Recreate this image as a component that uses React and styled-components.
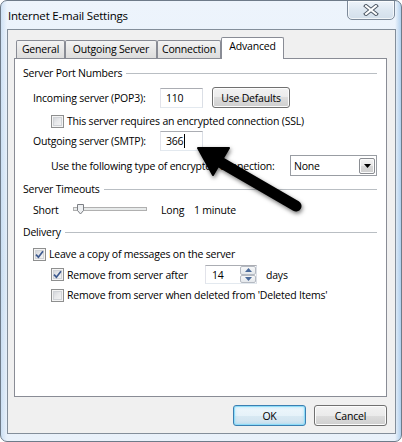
/* eslint-disable */
import React from 'react'
import styled, {createGlobalStyle} from 'styled-components'

const GlobalStyle = createGlobalStyle`
  html, body {
    margin: 0;
    padding: 0;
    background: #ffffff;
  }
  body {
    font-family: 'Segoe UI', 'Open Sans', 'Noto Sans', sans-serif;
    font-size: 10.5px;
    letter-spacing: -0.2px;
    color: #000;
  }
`

const Window = styled.div`
  position: relative;
  box-sizing: border-box;
  width: 402px;
  height: 442px;
  padding: 0 5px 7px 6px;
  border: 1px solid #6e7b89;
  border-radius: 7px;
  display: flex;
  flex-direction: column;
  overflow: hidden;
  background:
    linear-gradient(90deg, rgba(150, 190, 230, 0.35) 0, rgba(255, 255, 255, 0) 6px,
      rgba(255, 255, 255, 0) 394px, rgba(140, 185, 228, 0.6) 100%),
    linear-gradient(180deg, #edf4fc 0%, #e2edf8 60%, #e9f1fa 100%);
`

const TitleBar = styled.div`
  height: 28px;
  flex: none;
  display: flex;
  justify-content: space-between;
  align-items: flex-start;
`

const Title = styled.div`
  padding: 7px 0 0 1px;
  font-size: 11.5px;
  line-height: 16px;
`

const CloseButton = styled.div`
  box-sizing: border-box;
  width: 48px;
  height: 20px;
  margin: -1px 1px 0 0;
  border: 1px solid #7d8a9a;
  border-radius: 0 0 5px 5px;
  background: linear-gradient(180deg, #eef4fa 0%, #dde7f1 50%, #d3dfeb 100%);
  box-shadow: inset 0 0 0 1px rgba(255, 255, 255, 0.7);
  display: flex;
  align-items: center;
  justify-content: center;
`

const Client = styled.div`
  box-sizing: border-box;
  width: 389px;
  height: 405px;
  border: 1px solid #838e9a;
  background: #f0f0f0;
  padding: 7px 8px 0 6px;
  display: flex;
  flex-direction: column;
`

const TabStrip = styled.div`
  position: relative;
  z-index: 1;
  height: 21px;
  flex: none;
  display: flex;
  align-items: flex-end;
  padding-left: 2px;
`

const Tab = styled.div`
  box-sizing: border-box;
  width: ${p => p.$w}px;
  height: ${p => (p.$active ? 22 : 18)}px;
  margin-bottom: ${p => (p.$active ? -1 : 0)}px;
  border: 1px solid #898c95;
  border-bottom: none;
  border-radius: 2px 2px 0 0;
  background: ${p => (p.$active ? '#ffffff' : 'linear-gradient(180deg, #f3f3f3 0%, #e6e6e6 55%, #dddddd 100%)')};
  padding-top: 1px;
  text-align: center;
  line-height: 15px;
  white-space: nowrap;
`

const Panel = styled.div`
  box-sizing: border-box;
  width: 373px;
  height: 339px;
  flex: none;
  border: 1px solid #898c95;
  background: #ffffff;
  padding: 0 9px 0 8px;
  display: flex;
  flex-direction: column;
`

const GroupHeader = styled.div`
  display: flex;
  align-items: center;
  height: 14px;
  margin-top: ${p => p.$mt}px;
  white-space: nowrap;

  &::after {
    content: '';
    flex: 1;
    height: 1px;
    margin-left: 4px;
    background: #b9bec3;
  }
`

const Row = styled.div`
  display: flex;
  align-items: center;
  height: ${p => p.$h}px;
  margin-top: ${p => p.$mt}px;
  padding-left: ${p => p.$indent}px;
  white-space: nowrap;
`

const Label = styled.span`
  flex: none;
  width: ${p => (p.$w ? `${p.$w}px` : 'auto')};
  margin-left: ${p => p.$ml || 0}px;
`

const TextBox = styled.div`
  box-sizing: border-box;
  width: ${p => p.$w}px;
  height: ${p => p.$h}px;
  flex: none;
  border: 1px solid;
  border-color: #abadb3 #dbdfe6 #e3e9ef #e2e3ea;
  background: #ffffff;
  padding-left: 5px;
  display: flex;
  align-items: center;
`

const Caret = styled.span`
  width: 1px;
  height: 14px;
  margin-left: 1px;
  background: #000;
`

const Button = styled.div`
  box-sizing: border-box;
  width: ${p => p.$w}px;
  height: 21px;
  flex: none;
  margin-left: ${p => p.$ml || 0}px;
  border: 1px solid ${p => (p.$primary ? '#3c7fb1' : '#707070')};
  border-radius: 3px;
  background: ${p =>
    p.$primary
      ? 'linear-gradient(180deg, #eef7fc 0%, #e6f2f9 50%, #d8e9f3 50%, #cfe2ee 100%)'
      : 'linear-gradient(180deg, #f2f2f2 0%, #ebebeb 50%, #dddddd 50%, #cfcfcf 100%)'};
  box-shadow: ${p =>
    p.$primary
      ? 'inset 0 0 0 1px #8fdcf8, inset 0 0 3px 1px rgba(72, 200, 245, 0.35)'
      : 'inset 0 0 0 1px #fcfcfc'};
  display: flex;
  align-items: center;
  justify-content: center;
`

const CheckBox = styled.span`
  box-sizing: border-box;
  width: 13px;
  height: 13px;
  flex: none;
  border: 1px solid #8e8f8f;
  background: linear-gradient(135deg, #c9ccd1 0%, #e8e9eb 50%, #f7f7f7 100%);
  box-shadow: inset 0 0 0 1px #f4f4f4, inset 0 0 0 2px #d0d3d7;
  display: flex;
  align-items: center;
  justify-content: center;
`

const CheckLabel = styled.label`
  display: flex;
  align-items: center;
  gap: 3px;
  flex: none;
  width: ${p => (p.$w ? `${p.$w}px` : 'auto')};
`

const Combo = styled.div`
  box-sizing: border-box;
  width: 87px;
  height: 21px;
  flex: none;
  border: 1px solid #999da3;
  background: #ffffff;
  padding: 0 1px 0 3px;
  display: flex;
  align-items: center;
  justify-content: space-between;
`

const ComboButton = styled.div`
  box-sizing: border-box;
  width: 16px;
  height: 16px;
  border: 1px solid #8a8d92;
  border-radius: 2px;
  background: linear-gradient(180deg, #f4f4f4 0%, #e8e8e8 50%, #d8d8d8 50%, #cfcfcf 100%);
  box-shadow: inset 0 0 0 1px #fbfbfb;
  display: flex;
  align-items: center;
  justify-content: center;
`

const Spin = styled(TextBox)`
  padding: 0 0 0 6px;
  justify-content: space-between;
`

const SpinButtons = styled.div`
  width: 16px;
  height: 17px;
  display: flex;
  flex-direction: column;
`

const SpinButton = styled.div`
  box-sizing: border-box;
  flex: 1;
  border: 1px solid #b5bac2;
  border-radius: 2px;
  background: linear-gradient(180deg, #f6f7f8 0%, #e4e8ec 100%);
  display: flex;
  align-items: center;
  justify-content: center;
`

const Footer = styled.div`
  display: flex;
  justify-content: flex-end;
  gap: 8px;
  margin-top: 8px;
`

const Overlay = styled.svg`
  position: absolute;
  left: -1px;
  top: -1px;
  pointer-events: none;
  filter: drop-shadow(1px 2px 2px rgba(0, 0, 0, 0.55));
`

const Check = ({checked}) => (
  <CheckBox>
    {checked && (
      <svg width="9" height="9" viewBox="0 0 9 9">
        <path d="M1 4.6 L3.4 7.2 L8 1.2" fill="none" stroke="#3d5a8f" strokeWidth="1.7" />
      </svg>
    )}
  </CheckBox>
)

const Tri = ({up, color = '#000'}) => (
  <svg width="7" height="4" viewBox="0 0 7 4">
    <path d={up ? 'M0 4 L3.5 0 L7 4 Z' : 'M0 0 L7 0 L3.5 4 Z'} fill={color} />
  </svg>
)

const Slider = () => (
  <svg width="88" height="16" viewBox="0 0 88 16" style={{flex: 'none'}}>
    <rect x="0.5" y="5.5" width="73" height="3" fill="#e7eaea" stroke="#b0b0b0" />
    <path d="M4.5 2.5 h6 v6 l-3 3.5 l-3 -3.5 z" fill="#eef0f2" stroke="#7c7f84" />
  </svg>
)

const Arrow = () => (
  <Overlay width="402" height="442" viewBox="0 0 402 442">
    <line x1="220" y1="162" x2="296" y2="206" stroke="#000" strokeWidth="11" strokeLinecap="round" />
    <path d="M198 148 L229 148 L213 175 Z" fill="#000" stroke="#000" strokeWidth="2" strokeLinejoin="round" />
  </Overlay>
)

const App = () => (
  <>
    <GlobalStyle />
    <Window>
      <TitleBar>
        <Title>Internet E-mail Settings</Title>
        <CloseButton>
          <svg width="16" height="12" viewBox="0 0 16 12">
            <path d="M3 2 L13 10 M13 2 L3 10" stroke="#4e5966" strokeWidth="4" strokeLinecap="square" />
            <path d="M3 2 L13 10 M13 2 L3 10" stroke="#ffffff" strokeWidth="2" strokeLinecap="square" />
          </svg>
        </CloseButton>
      </TitleBar>
      <Client>
        <TabStrip>
          <Tab $w={49}>General</Tab>
          <Tab $w={92}>Outgoing Server</Tab>
          <Tab $w={64}>Connection</Tab>
          <Tab $w={63} $active>Advanced</Tab>
        </TabStrip>
        <Panel>
          <GroupHeader $mt={7}>Server Port Numbers</GroupHeader>
          <Row $h={21} $mt={7} $indent={10}>
            <Label $w={127}>Incoming server (POP3):</Label>
            <TextBox $w={43} $h={20}>110</TextBox>
            <Button $w={78} $ml={9}>Use Defaults</Button>
          </Row>
          <Row $h={16} $mt={5} $indent={28}>
            <CheckLabel>
              <Check />
              This server requires an encrypted connection (SSL)
            </CheckLabel>
          </Row>
          <Row $h={20} $mt={2} $indent={10}>
            <Label $w={127}>Outgoing server (SMTP):</Label>
            <TextBox $w={43} $h={20}>
              366
              <Caret />
            </TextBox>
          </Row>
          <Row $h={21} $mt={4} $indent={28}>
            <Label $w={239}>Use the following type of encrypted connection:</Label>
            <Combo>
              None
              <ComboButton>
                <Tri />
              </ComboButton>
            </Combo>
          </Row>

          <GroupHeader $mt={6}>Server Timeouts</GroupHeader>
          <Row $h={16} $mt={6} $indent={10}>
            <Label $w={40}>Short</Label>
            <Slider />
            <Label $w={33}>Long</Label>
            <Label>1 minute</Label>
          </Row>

          <GroupHeader $mt={7}>Delivery</GroupHeader>
          <Row $h={16} $mt={7} $indent={10}>
            <CheckLabel>
              <Check checked />
              Leave a copy of messages on the server
            </CheckLabel>
          </Row>
          <Row $h={19} $mt={3} $indent={28}>
            <CheckLabel $w={154}>
              <Check checked />
              Remove from server after
            </CheckLabel>
            <Spin $w={52} $h={19}>
              14
              <SpinButtons>
                <SpinButton>
                  <Tri up color="#4a6a9a" />
                </SpinButton>
                <SpinButton>
                  <Tri color="#4a6a9a" />
                </SpinButton>
              </SpinButtons>
            </Spin>
            <Label $ml={9}>days</Label>
          </Row>
          <Row $h={16} $mt={3} $indent={28}>
            <CheckLabel>
              <Check />
              Remove from server when deleted from 'Deleted Items'
            </CheckLabel>
          </Row>
        </Panel>
        <Footer>
          <Button $w={73} $primary>OK</Button>
          <Button $w={73}>Cancel</Button>
        </Footer>
      </Client>
      <Arrow />
    </Window>
  </>
)

export default App
